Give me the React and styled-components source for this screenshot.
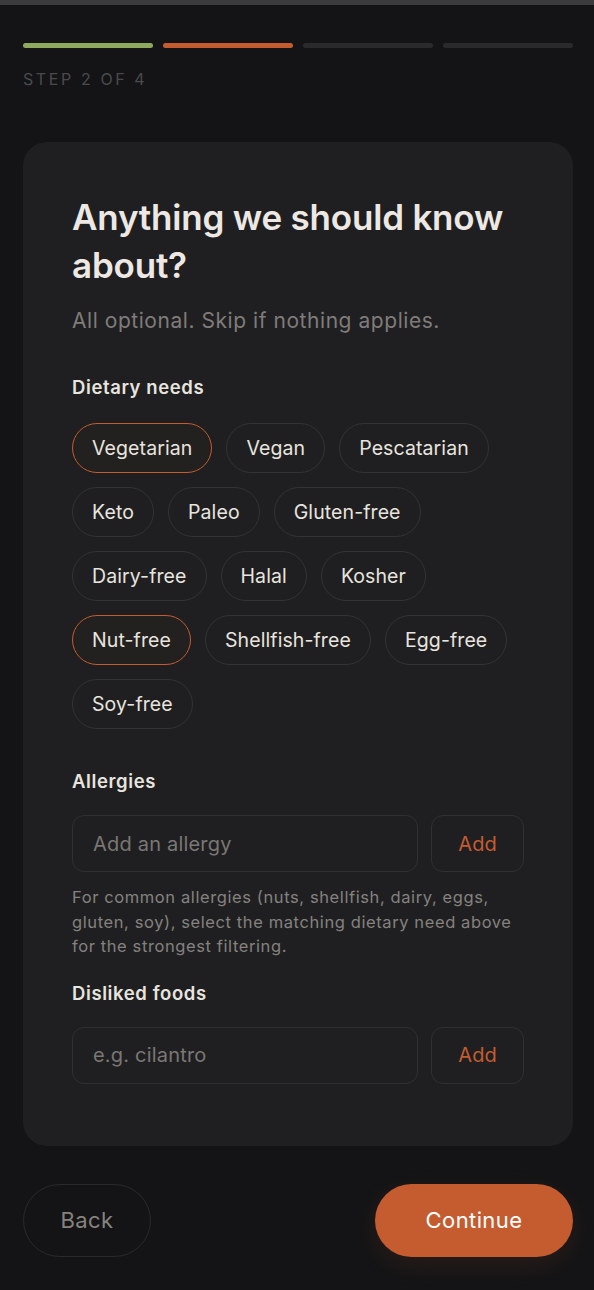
import React from "react"
import styled, { createGlobalStyle } from "styled-components"

const GlobalStyle = createGlobalStyle`
  html, body {
    margin: 0;
    padding: 0;
    background: #141416;
  }
  body {
    font-family: "Inter", "Noto Sans", sans-serif;
    -webkit-font-smoothing: antialiased;
  }
  * {
    box-sizing: border-box;
  }
`

const diets = [
  { label: "Vegetarian", selected: true },
  { label: "Vegan" },
  { label: "Pescatarian" },
  { label: "Keto" },
  { label: "Paleo" },
  { label: "Gluten-free" },
  { label: "Dairy-free" },
  { label: "Halal" },
  { label: "Kosher" },
  { label: "Nut-free", selected: true },
  { label: "Shellfish-free" },
  { label: "Egg-free" },
  { label: "Soy-free" },
]

export default function App() {
  return (
    <Page>
      <GlobalStyle />
      <TopStrip />
      <Main>
        <Progress>
          <Segment $color="#8fa860" />
          <Segment $color="#c45c30" />
          <Segment />
          <Segment />
        </Progress>
        <StepLabel>Step 2 of 4</StepLabel>

        <Card>
          <Title>Anything we should know about?</Title>
          <Subtitle>All optional. Skip if nothing applies.</Subtitle>

          <Section>
            <Label>Dietary needs</Label>
            <Chips>
              {diets.map((d) => (
                <Chip key={d.label} $selected={d.selected}>
                  {d.label}
                </Chip>
              ))}
            </Chips>
          </Section>

          <Section $top={40}>
            <Label>Allergies</Label>
            <InputRow>
              <TextInput placeholder="Add an allergy" />
              <AddButton>Add</AddButton>
            </InputRow>
            <Hint>
              For common allergies (nuts, shellfish, dairy, eggs, gluten, soy),
              select the matching dietary need above for the strongest
              filtering.
            </Hint>
          </Section>

          <Section $top={22}>
            <Label>Disliked foods</Label>
            <InputRow>
              <TextInput placeholder="e.g. cilantro" />
              <AddButton>Add</AddButton>
            </InputRow>
          </Section>
        </Card>

        <Footer>
          <BackButton>Back</BackButton>
          <ContinueButton>Continue</ContinueButton>
        </Footer>
      </Main>
    </Page>
  )
}

const Page = styled.div`
  min-height: 1290px;
  background: #141416;
`

const TopStrip = styled.div`
  height: 5px;
  background: #3b3b3d;
`

const Main = styled.div`
  padding: 38px 21px 32px 23px;
`

const Progress = styled.div`
  display: grid;
  grid-template-columns: repeat(4, 1fr);
  gap: 10px;
`

const Segment = styled.div`
  height: 5px;
  border-radius: 3px;
  background: ${(p) => p.$color || "#2a2a2d"};
`

const StepLabel = styled.div`
  margin-top: 21px;
  font-size: 16px;
  letter-spacing: 2.6px;
  text-transform: uppercase;
  color: #4a4a4d;
`

const Card = styled.div`
  margin-top: 53px;
  background: #1f1f21;
  border-radius: 24px;
  padding: 51px 49px 62px 49px;
`

const Title = styled.h1`
  margin: 0;
  font-size: 35px;
  line-height: 48px;
  font-weight: 600;
  letter-spacing: -0.2px;
  color: #ede8e3;
`

const Subtitle = styled.p`
  margin: 18px 0 0;
  font-size: 21px;
  line-height: 28px;
  letter-spacing: 0.55px;
  color: #7f7c79;
`

const Section = styled.div`
  margin-top: ${(p) => p.$top || 40}px;
`

const Label = styled.div`
  font-size: 18.5px;
  font-weight: 600;
  line-height: 24px;
  letter-spacing: 0.6px;
  color: #e8e4df;
`

const Chips = styled.div`
  margin-top: 24px;
  display: flex;
  flex-wrap: wrap;
  gap: 14px 14px;
`

const Chip = styled.button`
  height: 50px;
  padding: 0 19px;
  border-radius: 25px;
  border: 1.5px solid ${(p) => (p.$selected ? "#c45c30" : "#333336")};
  background: ${(p) => (p.$selected ? "#232020" : "transparent")};
  color: #e8e4df;
  font-family: inherit;
  font-size: 19.5px;
  letter-spacing: 0.1px;
`

const InputRow = styled.div`
  margin-top: 22px;
  display: flex;
  gap: 13px;
`

const TextInput = styled.input`
  flex: 1;
  min-width: 0;
  height: 57px;
  padding: 0 20px;
  border-radius: 12px;
  border: 1.5px solid #303033;
  background: transparent;
  font-family: inherit;
  font-size: 20px;
  letter-spacing: 0.2px;
  color: #e8e4df;

  &::placeholder {
    color: #7a7774;
  }
`

const AddButton = styled.button`
  width: 93px;
  height: 57px;
  border-radius: 12px;
  border: 1.5px solid #303033;
  background: transparent;
  color: #c45c30;
  font-family: inherit;
  font-size: 20px;
`

const Hint = styled.p`
  margin: 13px 0 0;
  font-size: 16.5px;
  line-height: 24.5px;
  letter-spacing: 0.6px;
  color: #85827f;
`

const Footer = styled.div`
  margin-top: 38px;
  display: flex;
  justify-content: space-between;
  align-items: center;
`

const BackButton = styled.button`
  width: 128px;
  height: 73px;
  border-radius: 37px;
  border: 1.5px solid #2a2a2d;
  background: transparent;
  color: #86837f;
  font-family: inherit;
  font-size: 22px;
  letter-spacing: 0.4px;
`

const ContinueButton = styled.button`
  width: 198px;
  height: 73px;
  border-radius: 37px;
  border: none;
  background: #c45c30;
  color: #fff;
  font-family: inherit;
  font-size: 22px;
  letter-spacing: 0.4px;
  box-shadow: 0 8px 24px rgba(196, 92, 48, 0.12);
`
